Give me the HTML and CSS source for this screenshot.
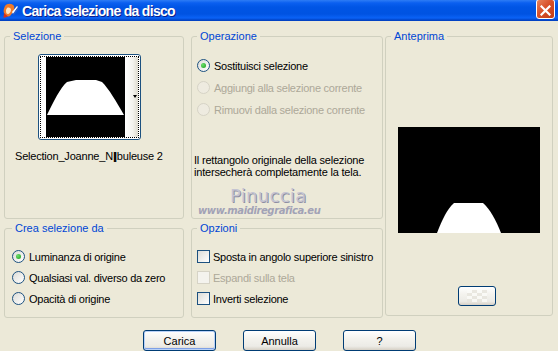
FILE: index.html
```html
<!DOCTYPE html>
<html lang="it">
<head>
    <meta charset="UTF-8">
    <title>Carica selezione da disco</title>
    <link rel="stylesheet" href="styles.css">
</head>
<body>
    <div class="window">
        <div class="titlebar">
            <svg class="app-icon" width="16" height="16" viewBox="0 0 16 16">
                <path d="M2 3 C4 0, 9 0, 11 3 C12 6, 10 10, 7 13 C5 14, 2 13, 1 10 C0 8, 1 5, 2 3 Z" fill="#f07a2a"/>
                <path d="M4 5 C6 4, 8 5, 8 7 C8 9, 6 11, 5 11 C3 11, 3 9, 3 7 Z" fill="#ffe3c0"/>
                <path d="M9 9 L14 3 L15 4 L10 11 Z" fill="#ffffff"/>
                <path d="M10 11 L15 4 L15.5 6 L11 12 Z" fill="#2a5fd0"/>
                <path d="M1 10 L0.5 15 L5 13.5 Z" fill="#d8301a"/>
            </svg>
            <span class="title">Carica selezione da disco</span>
            <span class="close">
                <svg width="11" height="11" viewBox="0 0 11 11">
                    <path d="M1.5 1.5 L9.5 9.5 M9.5 1.5 L1.5 9.5" stroke="#fff" stroke-width="2.2" stroke-linecap="square"/>
                </svg>
            </span>
        </div>

        <div class="dialog">
            <div class="columns">
                <div class="col col-left">
                    <fieldset class="group group-sel">
                        <legend>Selezione</legend>
                        <div class="thumb">
                            <div class="thumb-inner">
                                <svg class="thumb-img" width="79" height="80" viewBox="0 0 79 80">
                                    <rect width="79" height="80" fill="#000"/>
                                    <path d="M1 58 C8 44, 14 31, 21 25 L30 23 L50 23 L56 25 C63 32, 70 44, 78 58 Z" fill="#fff"/>
                                </svg>
                                <div class="thumb-drop"><span class="arrow"></span></div>
                            </div>
                        </div>
                        <div class="filename">Selection_Joanne_N<span class="glyph">|</span>buleuse 2</div>
                    </fieldset>

                    <fieldset class="group group-crea">
                        <legend>Crea selezione da</legend>
                        <div class="option"><span class="radio checked"></span>Luminanza di origine</div>
                        <div class="option"><span class="radio"></span>Qualsiasi val. diverso da zero</div>
                        <div class="option"><span class="radio"></span>Opacità di origine</div>
                    </fieldset>
                </div>

                <div class="col col-mid">
                    <fieldset class="group group-op">
                        <legend>Operazione</legend>
                        <div class="option"><span class="radio checked"></span>Sostituisci selezione</div>
                        <div class="option disabled"><span class="radio"></span>Aggiungi alla selezione corrente</div>
                        <div class="option disabled"><span class="radio"></span>Rimuovi dalla selezione corrente</div>
                        <p class="note">Il rettangolo originale della selezione intersecherà completamente la tela.</p>
                        <div class="watermark">
                            <div class="wm-name">Pinuccia</div>
                            <div class="wm-site">www.maidiregrafica.eu</div>
                        </div>
                    </fieldset>

                    <fieldset class="group group-opt">
                        <legend>Opzioni</legend>
                        <div class="option"><span class="check"></span>Sposta in angolo superiore sinistro</div>
                        <div class="option disabled"><span class="check"></span>Espandi sulla tela</div>
                        <div class="option"><span class="check"></span>Inverti selezione</div>
                    </fieldset>
                </div>

                <fieldset class="group group-preview">
                    <legend>Anteprima</legend>
                    <svg class="preview" width="142" height="106" viewBox="0 0 142 106">
                        <rect width="142" height="106" fill="#000"/>
                        <path d="M39 106 C44 93, 49 82, 56 76 L85 76 C92 82, 98 93, 103 106 Z" fill="#fff"/>
                    </svg>
                    <button class="btn btn-small"><span class="checker"></span></button>
                </fieldset>
            </div>

            <div class="buttons">
                <button class="btn btn-default">Carica</button>
                <button class="btn">Annulla</button>
                <button class="btn">?</button>
            </div>
        </div>
    </div>
</body>
</html>
```

FILE: styles.css
```css
body {
    margin: 0;
    background-color: #ece9d8;
    font-family: "Liberation Sans", Arial, sans-serif;
    font-size: 11px;
    color: #000;
}
.window {
    width: 558px;
    height: 351px;
    overflow: hidden;
    background-color: #ece9d8;
}
.titlebar {
    height: 21px;
    display: flex;
    align-items: center;
    background: linear-gradient(to bottom, #2d7cf5 0, #0a5ff0 3px, #0055e5 7px, #0053e2 14px, #0a62f6 18px, #0245c8 20px, #0040c0 21px);
}
.app-icon {
    margin-left: 3px;
    flex: none;
}
.title {
    margin-left: 3px;
    color: #fff;
    font-weight: bold;
    font-size: 14px;
    letter-spacing: -0.7px;
    text-shadow: 1px 1px 0 #0a1e8c;
}
.close {
    margin-left: auto;
    margin-right: 3px;
    margin-top: -4px;
    width: 19px;
    height: 20px;
    box-sizing: border-box;
    border: 1px solid #fff;
    border-radius: 3px;
    background: linear-gradient(135deg, #e8855e, #d8512a 45%, #c23c16);
    display: flex;
    align-items: center;
    justify-content: center;
    padding-top: 3px;
}

.dialog {
    padding: 9px 0 0 4px;
}
.columns {
    display: flex;
    align-items: flex-start;
}
.col {
    display: flex;
    flex-direction: column;
    gap: 3px;
}
.col-left {
    width: 180px;
}
.col-mid {
    width: 192px;
    margin-left: 7px;
}

.group {
    margin: 0;
    padding: 0 5px;
    min-width: 0;
    box-sizing: border-box;
    border: 1px solid #d0d0bf;
    border-radius: 3px;
}
.group legend {
    padding: 0 3px;
    line-height: 13px;
    color: #0046d5;
}
.group-sel {
    height: 189px;
}
.group-op {
    height: 189px;
    padding-top: 16px;
}
.group-crea,
.group-opt {
    height: 96px;
    padding-top: 15px;
}
.group-crea {
    padding-left: 7px;
}
.group-preview {
    width: 168px;
    height: 286px;
    margin-left: 2px;
}

/* selection thumbnail */
.thumb {
    margin: 11px 0 0 28px;
    width: 103px;
    height: 86px;
    box-sizing: border-box;
    border: 1px solid #1c5180;
    border-radius: 3px;
    background: #fff;
    padding: 1px;
}
.thumb-inner {
    height: 100%;
    box-sizing: border-box;
    border: 1px dotted #000;
    display: flex;
    padding-left: 5px;
}
.thumb-img {
    display: block;
    flex: none;
}
.thumb-drop {
    flex: 1;
    background: linear-gradient(to right, #fff, #f4f3ee 60%, #dedbcf);
    position: relative;
}
.thumb-drop .arrow {
    position: absolute;
    left: 8px;
    top: 38px;
    border-left: 2.5px solid transparent;
    border-right: 2.5px solid transparent;
    border-top: 3px solid #000;
}
.filename {
    margin: 10px 0 0 5px;
    line-height: 13px;
    letter-spacing: -0.2px;
    white-space: nowrap;
}
.glyph {
    font-weight: bold;
    text-shadow: 1px 0 0 #000;
    margin-right: 1px;
}

/* radios and checkboxes */
.option {
    display: flex;
    align-items: center;
    gap: 4px;
    height: 13px;
    letter-spacing: -0.25px;
    white-space: nowrap;
}
.group-op .option + .option {
    margin-top: 9px;
}
.group-crea .option + .option,
.group-opt .option + .option {
    margin-top: 8px;
}
.option.disabled {
    color: #aca899;
}
.radio {
    width: 13px;
    height: 13px;
    flex: none;
    box-sizing: border-box;
    border: 1px solid #1c5180;
    border-radius: 50%;
    background: linear-gradient(135deg, #dcdcd7, #fff);
    display: flex;
    align-items: center;
    justify-content: center;
}
.radio.checked::after {
    content: "";
    width: 5px;
    height: 5px;
    border-radius: 50%;
    background: radial-gradient(circle at 35% 35%, #6be06b, #1e9b1e);
}
.disabled .radio {
    border-color: #d6d3c6;
    background: #eeebe0;
}
.check {
    width: 13px;
    height: 13px;
    flex: none;
    box-sizing: border-box;
    border: 1px solid #1c5180;
    background: linear-gradient(135deg, #dcdcd7, #fff);
}
.group-opt .option {
    gap: 3px;
}
.disabled .check {
    border-color: #d6d3c6;
    background: #f4f3ee;
}

.note {
    margin: 38px 0 0 -3px;
    line-height: 12px;
    letter-spacing: -0.2px;
}
.watermark {
    margin: 8px 0 0 0;
}
.wm-name {
    margin-left: 33px;
    font-family: "DejaVu Sans", Verdana, sans-serif;
    font-size: 18px;
    line-height: 19px;
    letter-spacing: 0.3px;
    color: #c4c4d2;
    text-shadow: 1px 1px 0 #8e8ea4;
}
.wm-site {
    margin-left: 1px;
    font-family: "DejaVu Sans", Verdana, sans-serif;
    font-size: 10px;
    font-weight: bold;
    font-style: italic;
    line-height: 11px;
    color: #a2a2b6;
    letter-spacing: -0.4px;
}

/* preview */
.preview {
    display: block;
    margin: 84px 0 0 7px;
}
.btn {
    width: 73px;
    height: 21px;
    padding: 0;
    box-sizing: border-box;
    border: 1px solid #003c74;
    border-radius: 3px;
    background: linear-gradient(to bottom, #fff, #f4f3ee 40%, #ecebe6 80%, #d6d0c5);
    font-family: "Liberation Sans", Arial, sans-serif;
    font-size: 11px;
    color: #000;
}
.btn-small {
    display: flex;
    align-items: center;
    justify-content: center;
    width: 38px;
    height: 20px;
    margin: 53px 0 0 67px;
}
.checker {
    width: 20px;
    height: 12px;
    background-image: conic-gradient(#e6e4dc 25%, #fbfbf8 0 50%, #e6e4dc 0 75%, #fbfbf8 0);
    background-size: 10px 6px;
    opacity: 0.8;
}

.buttons {
    display: flex;
    gap: 27px;
    margin: 12px 0 0 139px;
}
.btn-default {
    box-shadow: inset 0 0 0 1px #b9d1f7, inset 0 -1px 0 1px #7fa0e6;
}
```
